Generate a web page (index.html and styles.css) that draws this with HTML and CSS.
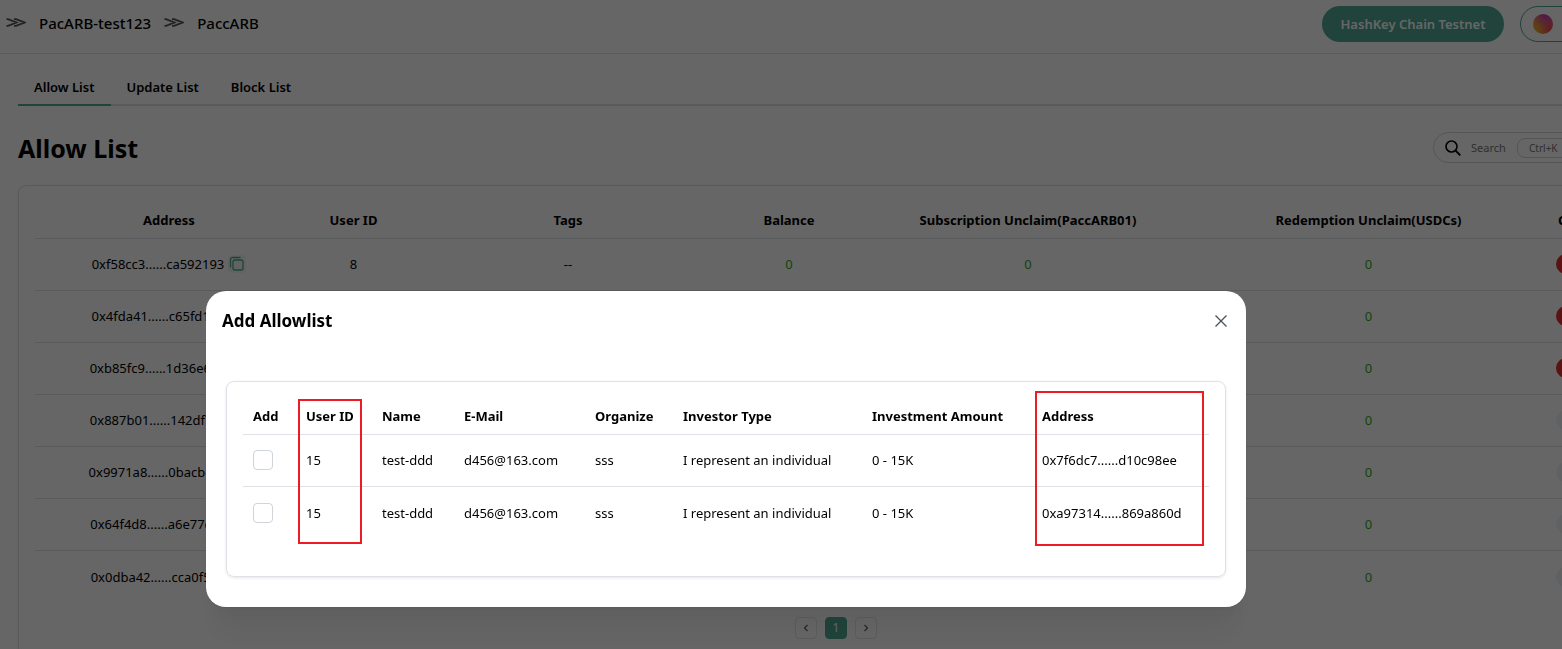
FILE: index.html
```html
<!DOCTYPE html>
<html lang="en">
<head>
<meta charset="utf-8">
<title>Allow List</title>
<link rel="stylesheet" href="styles.css">
</head>
<body>
<svg class="defs" aria-hidden="true">
  <symbol id="sep" viewBox="0 0 20 10"><path d="M0.500 1.200H2L10.500 4.500 2 7.800H.5M8 1.200h2L18.500 4.500 10 7.800H8" fill="none" stroke="currentColor" stroke-width="1.800"/></symbol>
</svg>
<div class="app">
  <header class="topbar">
    <nav class="crumbs" aria-label="Breadcrumb">
      <svg class="sep"><use href="#sep"/></svg>
      <a href="#">PacARB-test123</a>
      <svg class="sep"><use href="#sep"/></svg>
      <a href="#">PaccARB</a>
    </nav>
    <div class="account">
      <button class="network" type="button">HashKey Chain Testnet</button>
      <button class="wallet" type="button" aria-label="Wallet"><span class="avatar"></span></button>
    </div>
  </header>
  <main class="page">
    <nav class="tabs">
      <a class="tab active" href="#">Allow List</a>
      <a class="tab" href="#">Update List</a>
      <a class="tab" href="#">Block List</a>
    </nav>
    <div class="heading">
      <h1>Allow List</h1>
      <label class="search">
        <svg class="glass" viewBox="0 0 16 16"><circle cx="6.500" cy="6.500" r="5.500" fill="none" stroke="currentColor" stroke-width="1.600"/><path d="M10.500 10.500 15.300 15.300" stroke="currentColor" stroke-width="1.800"/></svg>
        <input type="text" placeholder="Search" aria-label="Search">
        <kbd>Ctrl+K</kbd>
      </label>
    </div>
    <section class="card">
      <table class="list">
        <colgroup><col class="c-address"><col class="c-user"><col class="c-tags"><col class="c-balance"><col class="c-sub"><col class="c-red"><col class="c-op"></colgroup>
        <thead><tr><th>Address</th><th>User ID</th><th>Tags</th><th>Balance</th><th>Subscription Unclaim(PaccARB01)</th><th>Redemption Unclaim(USDCs)</th><th>Control</th></tr></thead>
        <tbody>
          <tr><td><span class="addr">0xf58cc3......ca592193<button class="copy" type="button" aria-label="Copy address"><svg viewBox="0 0 18 18"><rect x="5" y="5" width="10" height="10" rx="2" fill="none" stroke="currentColor" stroke-width="1.300"/><path d="M2.500 12.500V4.500a2 2 0 0 1 2-2h8" fill="none" stroke="currentColor" stroke-width="1.300"/></svg></button></span></td><td>8</td><td>--</td><td class="num">0</td><td class="num">0</td><td class="num">0</td><td><button class="pill danger" type="button" aria-label="Block"></button></td></tr>
          <tr><td><span class="addr">0x4fda41......c65fd1a7<span class="copy"></span></span></td><td></td><td></td><td></td><td></td><td class="num">0</td><td><button class="pill danger" type="button" aria-label="Block"></button></td></tr>
          <tr><td><span class="addr">0xb85fc9......1d36e6b0<span class="copy"></span></span></td><td></td><td></td><td></td><td></td><td class="num">0</td><td><button class="pill danger" type="button" aria-label="Block"></button></td></tr>
          <tr><td><span class="addr">0x887b01......142df7c9<span class="copy"></span></span></td><td></td><td></td><td></td><td></td><td class="num">0</td><td><button class="pill" type="button" aria-label="Block"></button></td></tr>
          <tr><td><span class="addr">0x9971a8......0bacbe42<span class="copy"></span></span></td><td></td><td></td><td></td><td></td><td class="num">0</td><td><button class="pill" type="button" aria-label="Block"></button></td></tr>
          <tr><td><span class="addr">0x64f4d8......a6e77c05<span class="copy"></span></span></td><td></td><td></td><td></td><td></td><td class="num">0</td><td><button class="pill" type="button" aria-label="Block"></button></td></tr>
          <tr><td><span class="addr">0x0dba42......cca0f5e3<span class="copy"></span></span></td><td></td><td></td><td></td><td></td><td class="num">0</td><td><button class="pill" type="button" aria-label="Block"></button></td></tr>
        </tbody>
      </table>
      <div class="pager">
        <button type="button" aria-label="Previous page"><svg viewBox="0 0 8 8"><path d="M5.500 1 2.500 4l3 3" fill="none" stroke="currentColor" stroke-width="1.300"/></svg></button>
        <button class="current" type="button">1</button>
        <button type="button" aria-label="Next page"><svg viewBox="0 0 8 8"><path d="M2.500 1l3 3-3 3" fill="none" stroke="currentColor" stroke-width="1.300"/></svg></button>
      </div>
    </section>
  </main>
</div>
<div class="overlay">
  <div class="modal" role="dialog" aria-labelledby="dialog-title">
    <div class="modal-head">
      <h2 id="dialog-title">Add Allowlist</h2>
      <button class="close" type="button" aria-label="Close"><svg viewBox="0 0 14 14"><path d="M1.500 1.500l11 11M12.500 1.500l-11 11" stroke="currentColor" stroke-width="1.300"/></svg></button>
    </div>
    <div class="modal-card">
      <table class="users">
        <colgroup><col class="u-add"><col class="u-id"><col class="u-name"><col class="u-mail"><col class="u-org"><col class="u-type"><col class="u-amount"><col class="u-address"></colgroup>
        <thead><tr><th>Add</th><th>User ID</th><th>Name</th><th>E-Mail</th><th>Organize</th><th>Investor Type</th><th>Investment Amount</th><th>Address</th></tr></thead>
        <tbody>
          <tr><td><input type="checkbox" aria-label="Add 0x7f6dc7......d10c98ee"></td><td>15</td><td>test-ddd</td><td>d456@163.com</td><td>sss</td><td>I represent an individual</td><td>0 - 15K</td><td>0x7f6dc7......d10c98ee</td></tr>
          <tr><td><input type="checkbox" aria-label="Add 0xa97314......869a860d"></td><td>15</td><td>test-ddd</td><td>d456@163.com</td><td>sss</td><td>I represent an individual</td><td>0 - 15K</td><td>0xa97314......869a860d</td></tr>
        </tbody>
      </table>
      <span class="mark mark-id"></span>
      <span class="mark mark-address"></span>
    </div>
  </div>
</div>
</body>
</html>
```
FILE: styles.css
```css
* { box-sizing: border-box; }
body {
  margin: 0;
  font: 13px/20px "Segoe UI", "Noto Sans", "Open Sans", sans-serif;
  color: #000;
  background: #fff;
  overflow: hidden;
}
a { color: inherit; text-decoration: none; }
button { font: inherit; cursor: pointer; }
.defs { position: absolute; width: 0; height: 0; }

.app { height: 100vh; overflow: hidden; }
.topbar {
  display: flex;
  align-items: center;
  justify-content: space-between;
  height: 54px;
  padding: 0 0 6px 6px;
  border-bottom: 1px solid #dee2e6;
}
.crumbs { display: flex; align-items: center; gap: 13px; padding-bottom: 2px; font-size: 15px; font-weight: 500; }
.sep { width: 20px; height: 10px; color: #555; }
.account { display: flex; gap: 16px; margin-right: -60px; }
.network {
  height: 36px;
  width: 182px;
  padding: 0;
  border: 0;
  border-radius: 18px;
  background: #50a893;
  color: #fff;
  font-weight: 600;
  white-space: nowrap;
}
.wallet {
  display: flex;
  align-items: center;
  width: 102px;
  height: 36px;
  padding: 0 12px;
  border: 1px solid #50a893;
  border-radius: 18px;
  background: #fff;
}
.avatar {
  width: 20px;
  height: 20px;
  border-radius: 50%;
  background: radial-gradient(circle at 65% 0, #c42bd0, transparent 65%), radial-gradient(circle at 95% 80%, #f03858, transparent 55%), #f0a030;
}

.page { padding-left: 18px; margin-right: -92px; }
.tabs { display: flex; margin-top: 14px; border-bottom: 2px solid #dee2e6; font-weight: 600; }
.tab { padding: 9px 16px 7px; margin-bottom: -2px; border-bottom: 2px solid transparent; }
.tab.active { border-color: #50a893; }
.heading { display: flex; align-items: center; justify-content: space-between; height: 79px; padding: 4px 0 0; }
h1 { margin: 0; font-size: 25px; line-height: 32px; }
.search {
  display: flex;
  align-items: center;
  width: 221px;
  height: 31px;
  padding: 0 11px;
  border: 1px solid #d4d4d8;
  border-radius: 16px;
}
.glass { width: 16px; height: 16px; margin-right: 10px; }
.search input { width: 46px; padding: 0; border: 0; background: none; font: inherit; font-size: 11px; }
.search input::placeholder { color: #777; opacity: 1; }
kbd { padding: 0 11px; border: 1px solid #d4d4d8; border-radius: 8px; font: inherit; font-size: 10px; line-height: 18px; color: #777; }

.card { padding: 16px; border: 1px solid #dee2e6; border-radius: 8px; box-shadow: 0 1px 3px #0001; }
table { width: 100%; border-collapse: collapse; table-layout: fixed; }
th { font-weight: 700; white-space: nowrap; }
th, td { padding: 0; }
.list { text-align: center; }
.list th { height: 36px; border-bottom: 1px solid #dee2e6; }
.list td { height: 52px; border-bottom: 1px solid #dee2e6; }
.list tr:last-child td { height: 53px; border: 0; }
.list thead tr:last-child th { border-bottom: 1px solid #dee2e6; }
.c-address { width: 268px; }
.c-user { width: 101px; }
.c-tags { width: 328px; }
.c-balance { width: 114px; }
.c-sub { width: 364px; }
.c-red { width: 317px; }
.addr { display: inline-flex; align-items: center; gap: 4px; }
.copy { width: 18px; height: 18px; padding: 0; border: 0; border-radius: 4px; color: #50a893; }
button.copy { background: #f0f7f5; }
.copy svg { display: block; width: 18px; height: 18px; }
.num { color: #2faa28; }
.pill { display: block; width: 52px; height: 20px; margin: 0 auto; border: 0; border-radius: 10px; background: #f1f3f5; }
.danger { background: #e03131; }
.pager { display: flex; justify-content: center; gap: 8px; padding-top: 14px; }
.pager button { display: grid; place-items: center; width: 22px; height: 22px; padding: 0; border: 1px solid #e2e5e9; border-radius: 4px; background: #fff; color: #666; font-size: 12px; }
.pager .current { border-color: #50a893; background: #50a893; color: #fff; }
.pager svg { width: 8px; height: 8px; }

.overlay {
  position: fixed;
  inset: 0;
  display: flex;
  justify-content: center;
  align-items: flex-start;
  padding: 291px 110px 0 0;
  background: rgba(0, 0, 0, .6);
}
.modal {
  width: 1040px;
  padding: 16px 20px 30px;
  border-radius: 20px;
  background: #fff;
  box-shadow: 0 1px 3px rgba(0, 0, 0, .05), 0 36px 28px -7px rgba(0, 0, 0, .05), 0 17px 17px -7px rgba(0, 0, 0, .04);
}
.modal-head { display: flex; align-items: center; justify-content: space-between; height: 28px; margin: 0 -4px 46px; }
h2 { margin: 0; font-size: 17px; line-height: 28px; }
.close { display: grid; place-items: center; width: 28px; height: 28px; padding: 0; margin-right: -5px; border: 0; background: none; color: #495057; }
.close svg { width: 14px; height: 14px; }
.modal-card {
  position: relative;
  padding: 16px 16px 37px;
  border: 1px solid #dee2e6;
  border-radius: 8px;
  box-shadow: 0 1px 3px rgba(0, 0, 0, .1);
}
.users { text-align: left; }
.users th, .users td { padding: 0 0 0 10px; white-space: nowrap; }
.users th { height: 36px; border-bottom: 1px solid #dee2e6; }
.users td { height: 52px; }
.users tr:not(:last-child) td { border-bottom: 1px solid #dee2e6; }
.users tbody tr:last-child td { height: 53px; }
.u-add { width: 53px; }
.u-id { width: 76px; }
.u-name { width: 82px; }
.u-mail { width: 131px; }
.u-org { width: 88px; }
.u-type { width: 189px; }
.u-amount { width: 170px; }
.users input { appearance: none; display: block; width: 20px; height: 20px; margin: 0; border: 1px solid #ced4da; border-radius: 4px; background: #fff; }
.mark { position: absolute; border: 2px solid #ed1c24; pointer-events: none; }
.mark-id { left: 71px; top: 17px; width: 64px; height: 145px; }
.mark-address { left: 808px; top: 9px; width: 169px; height: 155px; }
```
